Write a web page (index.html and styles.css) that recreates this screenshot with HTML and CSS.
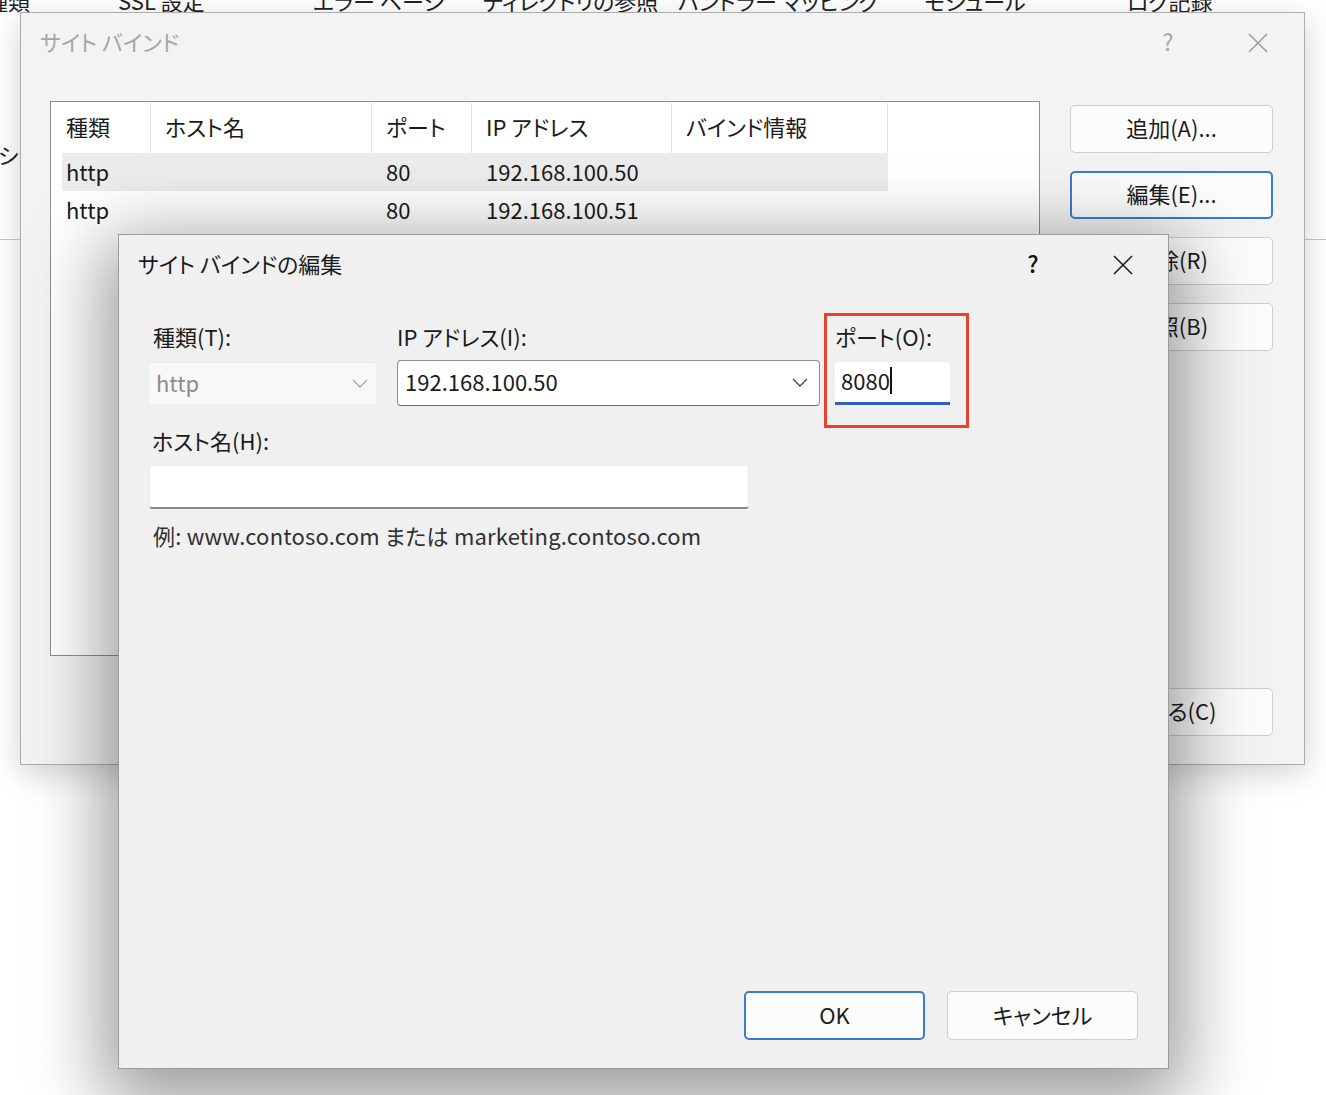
FILE: index.html
```html
<!DOCTYPE html>
<html lang="ja">
<head>
<meta charset="utf-8">
<title>サイト バインドの編集</title>
<link rel="stylesheet" href="styles.css">
</head>
<body>
<div class="desktop">
  <div class="tabs">
    <span>種類</span>
    <span>SSL 設定</span>
    <span>エラー ページ</span>
    <span>ディレクトリの参照</span>
    <span>ハンドラー マッピング</span>
    <span>モジュール</span>
    <span>ログ記録</span>
  </div>
  <div class="bg-label">シ:</div>
  <div class="bg-line"></div>
</div>

<div class="win outer">
  <div class="titlebar">
    <div class="title">サイト バインド</div>
    <div class="tb-btn help">?</div>
    <div class="tb-btn close">
      <svg width="20" height="20" viewBox="0 0 20 20"><path d="M1 1L19 19M19 1L1 19" stroke="#9c9c9c" stroke-width="1.6" fill="none"/></svg>
    </div>
  </div>
  <div class="outer-body">
    <div class="list">
      <div class="list-head">
        <div class="th c1">種類</div>
        <div class="th c2">ホスト名</div>
        <div class="th c3">ポート</div>
        <div class="th c4">IP アドレス</div>
        <div class="th c5">バインド情報</div>
      </div>
      <div class="row sel">
        <div class="td c1">http</div>
        <div class="td c2"></div>
        <div class="td c3">80</div>
        <div class="td c4">192.168.100.50</div>
        <div class="td c5"></div>
      </div>
      <div class="row">
        <div class="td c1">http</div>
        <div class="td c2"></div>
        <div class="td c3">80</div>
        <div class="td c4">192.168.100.51</div>
        <div class="td c5"></div>
      </div>
    </div>
    <div class="side-btns">
      <div class="btn">追加(A)...</div>
      <div class="btn primary">編集(E)...</div>
      <div class="btn">削除(R)</div>
      <div class="btn">参照(B)</div>
      <div class="btn last">閉じる(C)</div>
    </div>
  </div>
</div>

<div class="win inner">
  <div class="titlebar">
    <div class="title">サイト バインドの編集</div>
    <div class="tb-btn help">?</div>
    <div class="tb-btn close">
      <svg width="20" height="20" viewBox="0 0 20 20"><path d="M1 1L19 19M19 1L1 19" stroke="#1f1f1f" stroke-width="1.6" fill="none"/></svg>
    </div>
  </div>
  <div class="form">
    <div class="fields">
      <div class="group g-type">
        <div class="label">種類(T):</div>
        <div class="select disabled">
          <span>http</span>
          <svg width="16" height="9" viewBox="0 0 16 9"><path d="M1 1l7 7 7-7" fill="none" stroke="#a8a8a8" stroke-width="1.3"/></svg>
        </div>
      </div>
      <div class="group g-ip">
        <div class="label">IP アドレス(I):</div>
        <div class="select combo">
          <span>192.168.100.50</span>
          <svg width="16" height="9" viewBox="0 0 16 9"><path d="M1 1l7 7 7-7" fill="none" stroke="#444" stroke-width="1.3"/></svg>
        </div>
      </div>
      <div class="group g-port">
        <div class="label">ポート(O):</div>
        <div class="port-input"><span class="caret">8080</span></div>
        <div class="highlight"></div>
      </div>
    </div>
    <div class="label host-label">ホスト名(H):</div>
    <div class="host-input"></div>
    <div class="example">例: www.contoso.com または marketing.contoso.com</div>
    <div class="footer">
      <div class="btn ok primary">OK</div>
      <div class="btn cancel">キャンセル</div>
    </div>
  </div>
</div>
</body>
</html>
```
FILE: styles.css
```css
* { box-sizing: border-box; }
html, body { margin: 0; padding: 0; }
body {
  width: 1326px;
  height: 1095px;
  overflow: hidden;
  position: relative;
  background: #ffffff;
  font-family: "Noto Sans CJK JP", "Noto Sans", sans-serif;
  font-feature-settings: "palt";
  font-size: 22px;
  color: #1b1b1b;
}

/* background window */
.desktop { height: 100%; }
.tabs {
  display: grid;
  grid-template-columns: 132px 195px 170px 195px 246px 203px auto;
  margin: -12px 0 0 -14px;
  line-height: 24px;
  color: #222;
  white-space: nowrap;
}
.bg-label { margin: 130px 0 0 -2px; line-height: 24px; color: #222; }
.bg-line { margin-top: 73px; border-bottom: 1px solid #b7c8e4; }

/* windows */
.win {
  position: absolute;
  display: flex;
  flex-direction: column;
}
.titlebar {
  height: 60px;
  flex: none;
  display: flex;
  align-items: center;
  padding: 0 26px 4px 19px;
}
.title { flex: 1; white-space: nowrap; }
.tb-btn {
  width: 40px;
  height: 40px;
  display: flex;
  align-items: center;
  justify-content: center;
}
.tb-btn.close { margin-top: 4px; }
.tb-btn + .tb-btn { margin-left: 50px; }
.help { font-size: 23px; }

.outer {
  left: 20px;
  top: 12px;
  width: 1285px;
  height: 753px;
  background: #f3f3f3;
  border: 1px solid #adadad;
  box-shadow: 0 8px 30px rgba(0, 0, 0, 0.18);
}
.outer .title, .outer .help { color: #a5a5a5; }

.outer-body {
  display: flex;
  padding: 28px 0 0 29px;
}
.list {
  width: 990px;
  height: 555px;
  flex: none;
  background: #ffffff;
  border: 1px solid #8f8f8f;
  padding: 1px 0 0 1px;
}
.list-head { display: flex; height: 50px; }
.th {
  display: flex;
  align-items: center;
  padding: 0 0 4px 14px;
  border-right: 1px solid #e4e4e4;
  white-space: nowrap;
}
.c1 { width: 99px; }
.c2 { width: 221px; }
.c3 { width: 100px; }
.c4 { width: 200px; }
.c5 { width: 216px; }
.row {
  display: flex;
  align-items: center;
  height: 38px;
  width: 826px;
  margin-left: 10px;
  padding-bottom: 2px;
}
.row.sel { background: #ececec; }
.td { padding-left: 14px; white-space: nowrap; }
.row .c1 { width: 89px; padding-left: 4px; }

.side-btns {
  display: flex;
  flex-direction: column;
  gap: 18px;
  margin: 4px 0 0 30px;
  width: 203px;
  height: 631px;
}
.btn {
  height: 48px;
  display: flex;
  align-items: center;
  justify-content: center;
  padding-bottom: 4px;
  background: #fcfcfc;
  border: 1px solid #cdcdcd;
  border-radius: 5px;
  color: #1b1b1b;
  white-space: nowrap;
}
.btn.primary { border: 2px solid #3b7bcc; }
.btn.last { margin-top: auto; }

/* edit dialog */
.inner {
  left: 118px;
  top: 234px;
  width: 1051px;
  height: 835px;
  background: #f0f0f0;
  border: 1px solid #9b9b9b;
  box-shadow: 0 20px 70px 14px rgba(0, 0, 0, 0.4);
}
.inner .titlebar { padding-right: 25px; }
.inner .help { color: #111; font-weight: 500; }
.form {
  flex: 1;
  display: flex;
  flex-direction: column;
  padding: 28px 30px 28px 29px;
}
.fields { display: flex; align-items: flex-start; }
.group { display: flex; flex-direction: column; }
.label { line-height: 26px; height: 26px; white-space: nowrap; color: #1b1b1b; }
.g-type { width: 229px; }
.g-type .label { padding-left: 5px; }
.g-ip { width: 423px; margin-left: 20px; }
.g-port { width: 115px; margin-left: 15px; position: relative; }

.select {
  display: flex;
  align-items: center;
  justify-content: space-between;
  white-space: nowrap;
}
.select svg { margin-top: 3px; }
.select.disabled {
  margin-top: 13px;
  height: 43px;
  background: #f8f8f8;
  border: 1px solid #ececec;
  border-radius: 3px;
  color: #8c8c8c;
  padding: 0 8px 4px 7px;
}
.select.combo {
  margin-top: 11px;
  height: 46px;
  background: #ffffff;
  border: 1px solid #8d8d8d;
  border-bottom-color: #6f6f6f;
  border-radius: 4px;
  padding: 0 11px 4px 7px;
}
.port-input {
  margin-top: 13px;
  height: 43px;
  background: #ffffff;
  border-bottom: 3px solid #2d62c0;
  border-radius: 3px 3px 0 0;
  padding: 0 0 3px 6px;
  display: flex;
  align-items: center;
}
.caret {
  border-right: 2px solid #111;
  line-height: 27px;
}
.highlight {
  position: absolute;
  left: -11px;
  top: -10px;
  width: 145px;
  height: 115px;
  border: 3px solid #e6432c;
}

.host-label { margin-top: 21px; padding-left: 4px; }
.host-input {
  margin: 12px 0 0 1px;
  width: 600px;
  height: 44px;
  background: #ffffff;
  border: 1px solid #ececec;
  border-bottom: 2px solid #8a8a8a;
  border-radius: 3px;
}
.example {
  margin-top: 13px;
  padding-left: 5px;
  line-height: 26px;
  color: #303030;
  white-space: nowrap;
  letter-spacing: 0.2px;
}
.footer {
  margin-top: auto;
  display: flex;
  justify-content: flex-end;
  gap: 22px;
}
.btn.ok { width: 181px; height: 49px; }
.btn.cancel { width: 191px; height: 49px; }
```
